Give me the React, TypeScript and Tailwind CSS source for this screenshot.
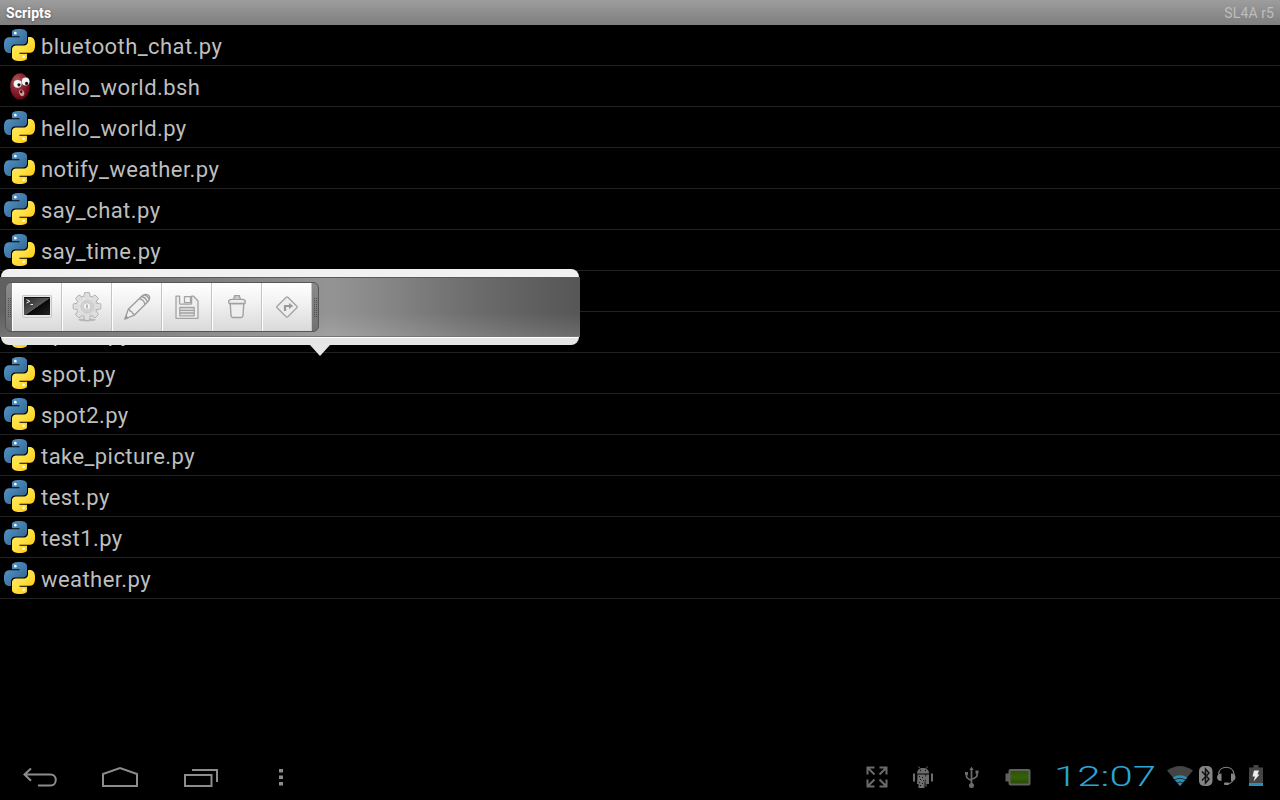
import React from "react";

const scripts = [
  "bluetooth_chat.py",
  "hello_world.bsh",
  "hello_world.py",
  "notify_weather.py",
  "say_chat.py",
  "say_time.py",
  "say_weather.py",
  "speak.py",
  "spot.py",
  "spot2.py",
  "take_picture.py",
  "test.py",
  "test1.py",
  "weather.py",
];

const SNAKE =
  "M14.25.18l.9.2.73.26.59.3.45.32.34.34.25.34.16.33.1.3.04.26.02.2-.01.13V8.5l-.05.63-.13.55-.21.46-.26.38-.3.31-.33.25-.35.19-.35.14-.33.1-.3.07-.26.04-.21.02H8.77l-.69.05-.59.14-.5.22-.41.27-.33.32-.27.35-.2.36-.15.37-.1.35-.07.32-.04.27-.02.21v3.06H3.17l-.21-.03-.28-.07-.32-.12-.35-.18-.36-.26-.36-.36-.35-.46-.32-.59-.28-.73-.21-.88-.14-1.05-.05-1.23.06-1.22.16-1.04.24-.87.32-.71.36-.57.4-.44.42-.33.42-.24.4-.16.36-.1.32-.05.24-.01h.16l.06.01h8.16v-.83H6.18l-.01-2.75-.02-.37.05-.34.11-.31.17-.28.25-.26.31-.23.38-.2.44-.18.51-.15.58-.12.64-.1.71-.06.77-.04.84-.02 1.27.05z";

function PythonIcon() {
  return (
    <svg className="h-8 w-8 shrink-0 pr-px" viewBox="0 0 24 24" preserveAspectRatio="none">
      <path d={SNAKE} fill="url(#pyBlue)" />
      <circle cx="8.8" cy="3.1" r="1" fill="#fff" />
      <g transform="rotate(180 12 12)">
        <path d={SNAKE} fill="url(#pyYellow)" />
        <circle cx="8.8" cy="3.1" r="1" fill="#fff" />
      </g>
    </svg>
  );
}

function BeanIcon() {
  return (
    <svg className="size-8 shrink-0" viewBox="0 0 32 32">
      <ellipse cx="16" cy="16.5" rx="9.8" ry="13.2" fill="url(#bean)" />
      <ellipse cx="13.6" cy="13.8" rx="4" ry="3.9" fill="#f4f4f4" />
      <ellipse cx="21.6" cy="11.6" rx="3.9" ry="4" fill="#f4f4f4" />
      <circle cx="15" cy="14.8" r="1.6" fill="#111" />
      <circle cx="22.6" cy="13.4" r="1.6" fill="#111" />
      <ellipse cx="17.7" cy="22.8" rx="2.5" ry="3.4" fill="#c79a9a" transform="rotate(-18 17.7 22.8)" />
      <ellipse cx="17.2" cy="21.6" rx="1.3" ry="1.6" fill="#5a1018" />
    </svg>
  );
}

function Gradients() {
  return (
    <svg className="absolute size-0">
      <defs>
        <linearGradient id="pyBlue" x1="0" y1="0" x2="1" y2="1">
          <stop offset="0" stopColor="#5a9fd4" />
          <stop offset="1" stopColor="#2b5b84" />
        </linearGradient>
        <linearGradient id="pyYellow" x1="1" y1="1" x2="0" y2="0">
          <stop offset="0" stopColor="#ffec70" />
          <stop offset=".5" stopColor="#ffe040" />
          <stop offset="1" stopColor="#ffbe00" />
        </linearGradient>
        <radialGradient id="bean" cx=".35" cy=".3" r=".75">
          <stop offset="0" stopColor="#ad6066" />
          <stop offset=".45" stopColor="#8e2731" />
          <stop offset="1" stopColor="#650010" />
        </radialGradient>
        <linearGradient id="screen" x1="0" y1="0" x2="1" y2="1">
          <stop offset="0" stopColor="#222" />
          <stop offset=".52" stopColor="#585858" />
          <stop offset=".54" stopColor="#080808" />
          <stop offset="1" stopColor="#222" />
        </linearGradient>
        <linearGradient id="gear" x1="0" y1="0" x2="1" y2="1">
          <stop offset="0" stopColor="#f4f4f4" />
          <stop offset="1" stopColor="#c8c8c8" />
        </linearGradient>
        <linearGradient id="cell" x1="0" y1="0" x2="0" y2="1">
          <stop offset="0" stopColor="#2c5406" />
          <stop offset=".5" stopColor="#356008" />
          <stop offset="1" stopColor="#284a05" />
        </linearGradient>
      </defs>
    </svg>
  );
}

const toothAngles = [0, 45, 90, 135, 180, 225, 270, 315];

const actionIcons = [
  <svg key="terminal" className="size-8" viewBox="0 0 32 32">
    <rect x="1.5" y="4.5" width="29" height="22" rx=".8" fill="#e4e6e4" stroke="#c6c8c6" />
    <rect x="3" y="6" width="26" height="18" fill="url(#screen)" />
    <path d="M3.5 6.5h25" stroke="#111" />
    <path d="M5.500 8.700l3.300 1.600L5.500 12M9.500 13.500H12" fill="none" stroke="#eee" />
  </svg>,
  <svg key="gear" className="size-8" viewBox="0 0 32 32">
    <ellipse cx="16" cy="28.8" rx="9" ry="1.600" fill="#b8b8b8" />
    <g transform="translate(0 -.6)">
      <g fill="url(#gear)" stroke="#aaa" strokeWidth=".9" strokeLinejoin="round">
        {toothAngles.map((a) => (
          <path key={a} d="M12.6 7l1-4.800h4.800l1 4.800z" transform={`rotate(${a} 16 16)`} />
        ))}
        <circle cx="16" cy="16" r="10.600" stroke="#b0b0b0" />
      </g>
      {toothAngles.map((a) => (
        <path key={a} d="M13.1 8.500l1-5.600h3.800l1 5.600z" fill="#dedede" transform={`rotate(${a} 16 16)`} />
      ))}
      <circle cx="16" cy="16" r="6.200" fill="#d4d4d4" stroke="#c4c4c4" strokeWidth=".8" />
      <circle cx="16" cy="16" r="3.700" fill="#f4f4f4" stroke="#bbb" strokeWidth=".8" />
      <path d="M16 14v4" stroke="#aaa" strokeWidth="1.600" />
    </g>
  </svg>,
  <svg key="pencil" className="size-8" viewBox="0 0 32 32" fill="none" stroke="#9b9b9b" strokeWidth="1.3" strokeLinejoin="round">
    <path fill="#f0f0f0" d="M4 28l3.300-9.800L20.700 5.200q2.600-2.400 5.400-1.600 3.200 1.200 2.400 4.200-.4 1.800-2.200 3.500L13.200 24.200z" />
    <path d="M7.300 18.200q1.700.3 1.900 2 2 .2 2.200 2 1.700.3 1.800 2M18.200 7.700q4.800 1 5.800 5.800M20.400 5.500q4.800 1 6 5.800M22.800 3.900q4.200 1 5.500 4.700" />
    <path d="M4 28l2.800-1.200-1.700-1.700z" fill="#9b9b9b" />
  </svg>,
  <svg key="save" className="size-8" viewBox="0 0 32 32" fill="none" stroke="#a3a3a3" strokeWidth="1.3" strokeLinejoin="round">
    <path fill="#eee" d="M5 5.200h3.600v7q0 1 1 1h10q1 0 1-1v-7h2L27 10v17.300H5z" />
    <path d="M13.500 5.700h6v6h-6z" />
    <path fill="#e2e2e2" d="M8.800 16.500h14.400v8.300H8.800zM8.800 19.300h14.400M8.800 22h14.400" />
  </svg>,
  <svg key="trash" className="size-8" viewBox="0 0 32 32" fill="#eee" stroke="#a0a0a0" strokeWidth="1.4" strokeLinejoin="round">
    <path d="M9.200 12.500l.8 12q.2 2 2 2h8q1.800 0 2-2l.8-12z" />
    <path d="M8.700 12.500q-1.200-.2-1-2 .2-1.900 3-2.100l2-.1q0-1.400.5-1.800h5.600q.5.400.5 1.800l2 .1q2.800.2 3 2.100.2 1.800-1 2z" />
    <path d="M13.500 6.400V4.800h5v1.600M13 8.400h6" />
  </svg>,
  <svg key="route" className="size-8" viewBox="0 0 32 32" fill="none" stroke="#a3a3a3" strokeWidth="1.3" strokeLinejoin="round">
    <path fill="#ededed" d="M15.200 6.200q.8-.7 1.600 0l9.100 9q.8.800 0 1.600l-9.100 9q-.8.700-1.600 0l-9.100-9q-.8-.8 0-1.600z" />
    <path d="M14 20v-5h4" strokeWidth="2.2" stroke="#999" strokeLinejoin="miter" />
    <path d="M18 12l4.200 3-4.200 3z" fill="#999" stroke="none" />
  </svg>,
];

function Grip() {
  return (
    <div className="flex flex-1 items-center justify-center">
      <div className="grid grid-cols-2 gap-px">
        {Array.from({ length: 20 }, (_, i) => (
          <span key={i} className="size-px bg-[#505050]" />
        ))}
      </div>
    </div>
  );
}

function QuickActions() {
  return (
    <div className="absolute top-[269px] left-0 w-[580px]">
      <div className="mx-px h-2 rounded-t-[8px] bg-[#f1f1f1]" />
      <div className="flex h-[60px] items-center border-y border-t-[#5a5a5a] border-b-[#777] bg-[linear-gradient(to_bottom,transparent_60%,rgba(255,255,255,.12)),linear-gradient(to_right,#606060_0%,#737373_25%,#8a8a8a_48%,#949494_57%,#878787_66%,#6f6f6f_80%,#5f5f5f_92%,#565656_100%)] pl-[5px]">
        <div className="flex h-[50px] w-[314px] overflow-hidden rounded-md border border-[#555] bg-[linear-gradient(to_bottom,#8b8b8b,#707070)]">
          <Grip />
          <div className="flex">
            {actionIcons.map((icon, i) => (
              <div
                key={i}
                className="flex w-[50px] items-center justify-center border-r border-l border-r-[#c4c4c4] border-l-white bg-[linear-gradient(to_bottom,#ffffff,#f2f2f2_40%,#d9d9d9)]"
              >
                {icon}
              </div>
            ))}
          </div>
          <Grip />
        </div>
      </div>
      <div className="mx-px h-2 rounded-b-[8px] border-t border-white bg-[#e5e5e5]" />
      <svg className="ml-[310px] block h-[11px] w-5" viewBox="0 0 20 11">
        <path d="M0 0h20L10 11z" fill="#e5e5e5" />
      </svg>
    </div>
  );
}

function SystemBar() {
  return (
    <footer className="flex h-12 items-center">
      <div className="flex items-center">
        <svg className="h-12 w-20" viewBox="0 0 80 48" fill="none" stroke="#8c8c8c" strokeWidth="2">
          <path d="M25 23h25.500c7 0 7 11 0 11H38M31 17l-6.500 6 6.500 6.300" transform="translate(0 -.5)" />
        </svg>
        <svg className="h-12 w-20" viewBox="0 0 80 48" fill="none" stroke="#8c8c8c" strokeWidth="2">
          <path d="M23 34V22l17-6 17 6v12z" />
        </svg>
        <svg className="h-12 w-20" viewBox="0 0 80 48" fill="none" stroke="#8c8c8c" strokeWidth="2">
          <path d="M25 23h26.500v11H25zM32 18h25v12" />
        </svg>
        <svg className="h-12 w-20" viewBox="0 0 80 48" fill="#8c8c8c">
          <path d="M39 17h4v3.500h-4zM39 23.500h4V27h-4zM39 30h4v3.500h-4z" />
        </svg>
      </div>
      <div className="flex flex-1 items-center justify-end">
        <svg className="h-12 w-12" viewBox="0 0 48 48" fill="none" stroke="#6a6a6a" strokeWidth="2">
          <path d="M14 23v-7h7M15 17l6 6M26 16h7v7M32 17l-6 6M14 28v7h7M15 34l6-6M33 28v7h-7M32 34l-6-6" transform="translate(-.5 -.5)" />
        </svg>
        <svg className="h-12 w-12" viewBox="0 0 48 48" fill="#6c6c6c">
          <path d="M15 21.500c0-7.200 12-7.200 12 0z" />
          <path d="M18 16.500l-1.500-2M24 16.500l1.500-2" stroke="#6c6c6c" />
          <path d="M11 21.500h2v8h-2zM29 21.500h2v8h-2zM15.500 22.500h8v4q-1 2-1 9.500h-6v-4H15zM24.500 22.500H27v9.500h-2.500v2.500h-1v-9z" />
          <path d="M17 24h1v1h-1zM20 25h1v1h-1zM18 27h1v1h-1zM21 28h1v1h-1zM17 30h1v1h-1zM20 31h1v1h-1zM18 33h1v1h-1z" fill="#111" />
          <circle cx="18.500" cy="18.500" r=".7" fill="#111" />
          <circle cx="23.500" cy="18.500" r=".7" fill="#111" />
        </svg>
        <svg className="h-12 w-12" viewBox="0 0 48 48" fill="none" stroke="#6c6c6c" strokeWidth="1.7">
          <path d="M21.500 17v17M16.500 22v2.500q0 1.800 5 4M27 20v3.500q0 1.800-5.500 3.800" />
          <path d="M19.300 18l2.200-3.200 2.200 3.200zM15 20h3v3h-3zM25.500 18.500h3v3h-3z" fill="#6c6c6c" stroke="none" />
          <circle cx="21.500" cy="33.500" r="2.500" fill="#6c6c6c" stroke="none" />
        </svg>
        <svg className="h-12 w-12" viewBox="0 0 48 48">
          <path d="M7.500 21.500h5v8h-5z" fill="#606060" />
          <rect x="11.500" y="18" width="20" height="14.500" rx="1" fill="url(#cell)" stroke="#606060" strokeWidth="2" />
        </svg>
        <div className="flex h-12 w-[119px] items-center pt-0.5 pl-2">
          <span className="origin-left scale-x-[1.5] font-[Roboto] text-[28px] leading-none font-light whitespace-nowrap text-[#29a4d4]">12:07</span>
        </div>
        <svg className="h-12 w-[115px]" viewBox="1165 752 115 48">
          <path d="M1167 770.500q13-9 26 0l-13 15.500z" fill="#444" />
          <path d="M1172.800 777.500q7.200-4.500 14.400 0L1180 786z" fill="#2a8fb5" />
          <path d="M1174 780.300q6-4 12 0M1176.500 783q3.500-2 7 0" fill="none" stroke="#1c2a30" strokeWidth=".9" />
          <rect x="1199" y="766" width="13.500" height="20" rx="5" fill="#858585" />
          <path d="M1202 771.500l7 7.500-3.500 4V769l3.500 4-7 7.500" fill="none" stroke="#111" strokeWidth="1.500" />
          <path d="M1218.500 774c1-9 14.500-9 15.500 0v3q-1 6-6 7" fill="none" stroke="#858585" strokeWidth="1.200" />
          <path d="M1221.500 773.500v7.500q-4.500 0-4.500-3.700t4.500-3.800zM1231 773.500v7.500q4.500 0 4.500-3.700t-4.500-3.800z" fill="#858585" />
          <rect x="1224" y="782.500" width="5" height="2.500" rx="1" fill="#858585" />
          <path d="M1249 767.500h4.500V765h5v2.500h4.500V786h-14z" fill="#444" />
          <path d="M1249 783h14v3h-14z" fill="#2a8fb5" />
          <path d="M1254 770.500h5l-1.500 4h2l-6 7 1.500-5h-2.500z" fill="#eee" />
        </svg>
      </div>
    </footer>
  );
}

export default function App() {
  return (
    <div className="relative flex h-[800px] w-[1280px] flex-col overflow-hidden bg-black font-[Roboto,sans-serif]">
      <Gradients />
      <header className="flex h-[25px] items-center justify-between bg-[linear-gradient(to_bottom,#9d9d9d,#7e7e7e)] px-1.5 text-[14px] leading-none">
        <h1 className="font-bold tracking-[0.1px] text-white [text-shadow:0_1px_3px_#555]">Scripts</h1>
        <span className="tracking-[0.1px] text-[#bdbdbd]">SL4A r5</span>
      </header>
      <ul className="flex-1">
        {scripts.map((name) => (
          <li key={name} className="flex h-[41px] items-center gap-[5px] border-b border-[#222] pl-1">
            {name.endsWith(".py") ? <PythonIcon /> : <BeanIcon />}
            <span className="pt-[3px] text-[22px] leading-none tracking-[0.43px] text-[#bebebe]">{name}</span>
          </li>
        ))}
      </ul>
      <QuickActions />
      <SystemBar />
    </div>
  );
}
